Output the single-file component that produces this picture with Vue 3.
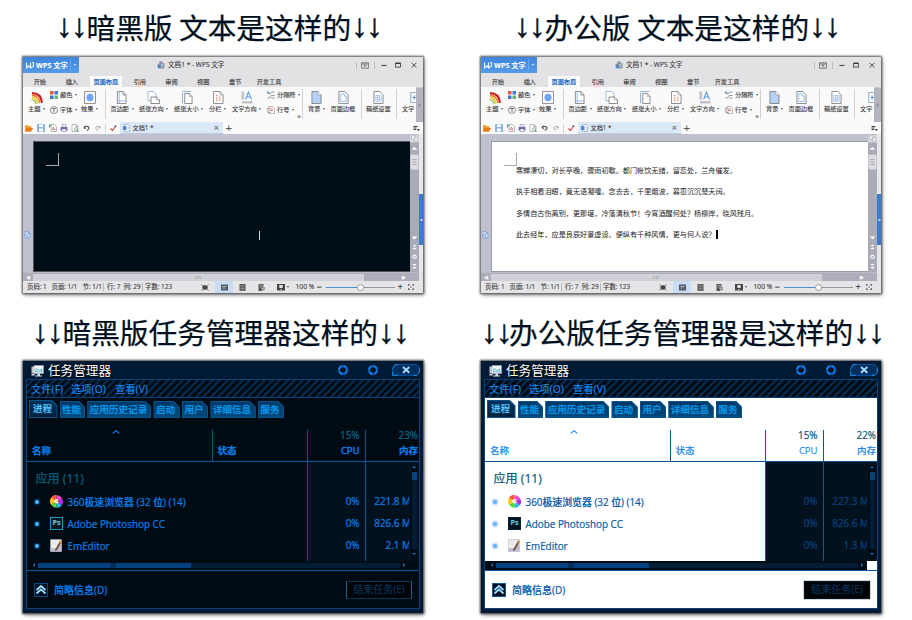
<script setup>
import { h } from 'vue'

const shapes = {
  w: ['0 0 14 12', '<path d="M1 1v9l4-3 3 3V1M5 5v3M8 10l5-3V1h-2" fill="none" stroke="#fff" stroke-width="1.8"/>'],
  cloud: ['0 0 14 14', '<path d="M4 1h6v3h3v9H6V9H1V5h3z" fill="#8793a5"/><circle cx="4" cy="10" r="3" fill="#4d83c5"/><path d="M7 6h4M7 9h4" stroke="#fff"/>'],
  pin: ['0 0 14 14', '<path d="M1 1.500h12v11H1zM1 4h12M7 11V6M4.500 8L7 5.500 9.500 8" fill="none" stroke="#555" stroke-width="1.300"/>'],
  min: ['0 0 14 14', '<path d="M1 8h12" stroke="#333" stroke-width="2.200"/>'],
  max: ['0 0 14 14', '<path d="M1 3h12v9H1z" fill="none" stroke="#333" stroke-width="2"/><path d="M1 3h12" stroke="#333" stroke-width="3"/>'],
  close: ['0 0 14 14', '<path d="M1.500 2l11 11M12.500 2l-11 11" stroke="#333" stroke-width="2"/>'],
  theme: ['0 0 24 24', '<path d="M2 4c12 0 19 7 20 18" stroke="#c92027" stroke-width="4" fill="none"/><path d="M2 8c9 0 15 6 16 14" stroke="#ef7b20" stroke-width="3" fill="none"/><path d="M2 12c7 0 10 4 12 11" stroke="#eacb35" stroke-width="4" fill="none"/><path d="M1 16c5 0 8 3 9 8" stroke="#77b956" stroke-width="2" fill="none"/>'],
  color: ['0 0 16 16', '<path d="M0 0h7v7H0z" fill="#e65a3d"/><path d="M9 0h7v7H9z" fill="#3d7cdc"/><path d="M0 9h7v7H0z" fill="#3f74c9"/><path d="M9 9h7v7H9z" fill="#67b878"/>'],
  font: ['0 0 16 16', '<circle cx="8" cy="8" r="7" fill="none" stroke="#555" stroke-width="1.300"/><path d="M4.500 5h7M8 5v7" stroke="#444" stroke-width="1.500"/>'],
  effect: ['0 0 24 24', '<path d="M1 1h22v22H1z" fill="#fafafa" stroke="#777" stroke-width="1.500"/><circle cx="12" cy="12" r="7" fill="#71a3f2"/>'],
  margin: ['0 0 24 26', '<path d="M3 1h12l7 7v17H3z" fill="#fff" stroke="#777" stroke-width="1.700"/><path d="M15 1v7h7" fill="none" stroke="#777" stroke-width="1.500"/><path d="M7 1v24M3 20h19" fill="none" stroke="#80aeea" stroke-width="1.700"/>'],
  orient: ['0 0 26 26', '<path d="M2 1h11l5 5v13H2z" fill="#fff" stroke="#8badd8" stroke-width="1.700"/><path d="M8 12h11l6 6v7H8z" fill="#fff" stroke="#777" stroke-width="1.700"/><path d="M18 12v6h7" fill="none" stroke="#777"/>'],
  size: ['0 0 24 26', '<path d="M1 1h19M1 4v20" stroke="#85acdf" stroke-width="2"/><path d="M6 5h10l6 6v14H6z" fill="#fff" stroke="#777" stroke-width="1.700"/><path d="M16 5v6h6" fill="none" stroke="#777"/>'],
  columns: ['0 0 24 26', '<path d="M1 1h14l7 7v17H1z" fill="#fff" stroke="#777" stroke-width="1.700"/><path d="M15 1v7h7" fill="none" stroke="#777"/><path d="M8 8v13M15 11v10" stroke="#df8060" stroke-width="3" stroke-dasharray="2 1.500"/>'],
  textdir: ['0 0 26 26', '<path d="M1 1h6v16H1zM2 20h23v5H2z" fill="#c8c8ca"/><path d="M3 1v16M2 23h23" stroke="#aaa" stroke-dasharray="2 1"/><path d="M10 17l6-15 7 15M12 12h8" fill="none" stroke="#5797e5" stroke-width="2.200"/>'],
  breaks: ['0 0 18 16', '<path d="M1 1l2 4h5M6 5c4 0 1-3 8-3h3M1 14h4c2 0 2-5 5-5h7M9 14h8" fill="none" stroke="#666" stroke-width="1.400"/><path d="M1 0v6l4-3z" fill="#4989d3"/>'],
  lines: ['0 0 16 16', '<path d="M4 1h7l4 4v10H4z" fill="#fff" stroke="#777"/><path d="M1 3v10h7" fill="none" stroke="#777"/><path d="M6 6h6M6 9h6M2 5h3" stroke="#cf5757" stroke-width="1.500"/>'],
  back: ['0 0 24 26', '<path d="M2 1h13l7 7v17H2z" fill="#b7d0f8" stroke="#777" stroke-width="1.700"/><path d="M15 1v7h7" fill="#fff" stroke="#777"/>'],
  border: ['0 0 24 26', '<path d="M2 1h13l7 7v17H2z" fill="#fff" stroke="#777" stroke-width="1.700"/><path d="M6 6h8v4h4v11H6z" fill="none" stroke="#92bdf2" stroke-width="2"/>'],
  grid: ['0 0 24 26', '<path d="M2 1h13l7 7v17H2z" fill="#fff" stroke="#777" stroke-width="1.700"/><path d="M6 9h12v12H6zM6 13h12M6 17h12M10 9v12M14 9v12" fill="none" stroke="#92b8ee" stroke-width="1.300"/>'],
  half: ['0 0 16 26', '<path d="M15 3H2v20h13" fill="none" stroke="#829dc6" stroke-width="2"/><path d="M7 13h8M11 9v8" stroke="#4487dd" stroke-width="2"/>'],
  folder: ['0 0 16 14', '<path d="M0 2h6l2 2h5v3h3l-4 6H0z" fill="#f39b32"/><path d="M3 7h13l-4 6H0z" fill="#e87917"/>'],
  save: ['0 0 16 16', '<path d="M1 1h14v14H1z" fill="#8db6ee" stroke="#568bd5"/><path d="M4 1h8v5H4zM4 9h8v6H4z" fill="#fff"/>'],
  pdf: ['0 0 16 16', '<path d="M4 1h7l4 4v10H4z" fill="#fff" stroke="#777"/><path d="M1 2v5M1 2h4" stroke="#3c8956" stroke-width="2"/><path d="M6 12l3-6 3 6-5-2" fill="none" stroke="#cf4f56" stroke-width="1.300"/>'],
  print: ['0 0 16 16', '<path d="M1 6h14v7H1z" fill="#7774b2"/><path d="M4 1h8v5H4zM4 10h8v5H4z" fill="#fff" stroke="#6763a1"/>'],
  preview: ['0 0 16 16', '<path d="M2 1h8l4 4v10H2zM10 1v4h4" fill="#fff" stroke="#777"/><circle cx="10" cy="10" r="3" fill="#dceee8" stroke="#5c8f7e"/><path d="M12 12l3 3" stroke="#5c8f7e" stroke-width="2"/>'],
  undo: ['0 0 16 14', '<path d="M2 6l4-4M2 6l4 3M2 6c8-5 14-1 11 3-1 2-3 3-4 4" fill="none" stroke="#444" stroke-width="2.400"/>'],
  redo: ['0 0 16 14', '<path d="M14 6l-4-4M14 6l-4 3M14 6C6 1 0 5 3 9c1 2 3 3 5 3" fill="none" stroke="#888" stroke-width="1.900"/>'],
  check: ['0 0 14 14', '<path d="M1 7l4 4 5-7" fill="none" stroke="#d23c3c" stroke-width="2.200"/><path d="M9 1h4v3H9z" fill="#555"/>'],
  doc: ['0 0 14 16', '<path d="M3 1h7l3 4v10H3z" fill="#fff" stroke="#6f89a7"/><path d="M0 4h7v8H0z" fill="#4d8ad0"/><path d="M9 7h3M9 10h3" stroke="#7aa2d0"/>'],
  menu: ['0 0 14 14', '<path d="M1 3h8M1 6h6M1 9h5" stroke="#444" stroke-width="2"/><path d="M7 8h7l-3 4z" fill="#444"/>'],
  fit: ['0 0 16 14', '<path d="M4 4h8v6H4z" fill="#444"/><path d="M1 1l3 3M15 1l-3 3M1 13l3-3M15 13l-3-3M3 5v4M13 5v4M5 3h6M5 11h6" stroke="#555" stroke-width="1.600"/>'],
  view: ['0 0 14 14', '<path d="M0 1h14v12H0z" fill="#555c66"/><path d="M3 5h8M3 8h5" stroke="#d4e5f5" stroke-width="1.300"/>'],
  outline: ['0 0 14 14', '<path d="M1 0h12v14H1z" fill="#555"/><path d="M3 3h8M3 6h8M3 9h8M3 12h8" stroke="#bbb"/>'],
  web: ['0 0 14 14', '<path d="M1 0h10v5H8v9H1z" fill="#555"/><circle cx="10" cy="9" r="4" fill="#777"/><path d="M3 3h6M3 6h4M7 9h6M10 6v6" stroke="#ddd"/>'],
  screen: ['0 0 14 14', '<path d="M0 0h14v13H0z" fill="#444"/><path d="M4 2h6v6H4zM6 10h2v2H6z" fill="#e4e4e4"/>'],
  expand: ['0 0 12 12', '<path d="M1 4V1h3M8 1h3v3M1 8v3h3M8 11h3V8" fill="none" stroke="#555" stroke-width="1.700"/><path d="M4 4l4 4M8 4L4 8" stroke="#777"/>'],
  side: ['0 0 14 16', '<path d="M2 1h6l4 4v9H2zM8 1v4h4M0 8h7v6" fill="#d0def2" stroke="#6f9bdc" stroke-width="1.400"/>'],
  vscroll: ['0 0 8 140', '<path d="M0 .500h8v8H0z" fill="#d5d6df"/><path d="M1.500 2h3v3h-3zM4 4h3v3H4z" fill="#fff" stroke="#aaa" stroke-width=".600"/><path d="M1.500 16L4 13l2.500 3zM1.500 104L4 107l2.500-3z" fill="#fff"/><path d="M.500 21h7v15h-7z" fill="#dedfe3"/><path d="M2 26h4M2 28.500h4M2 31h4" stroke="#92939a" stroke-width=".700"/><path d="M2 114l2-2 2 2zM2 117l2-2 2 2zM2 132l2 2 2-2zM2 135l2 2 2-2z" fill="#fff"/><circle cx="4" cy="124.500" r="1.600" fill="none" stroke="#fff"/>'],
  monitor: ['0 0 26 24', '<path d="M1 3h18v14H1z" fill="#c5cbd0"/><path d="M6 1h19v16H6z" fill="#eef4f5" stroke="#a5b1b8"/><path d="M9 9c4-6 5 5 8 1l5-2v6H9z" fill="#bde3ef" stroke="#2292bf"/><path d="M13 17h5v4h4v2H8v-2h5zM1 18h6v3H1z" fill="#dce2e6"/>'],
  gear: ['0 0 24 24', '<circle cx="12" cy="12" r="8" fill="none" stroke="#064c9a" stroke-width="5"/><circle cx="12" cy="12" r="8" fill="none" stroke="#168aff" stroke-width="2.500" stroke-dasharray="9 3.560"/><circle cx="12" cy="12" r="4" fill="#03101e"/>'],
  exit: ['0 0 84 36', '<path d="M9 2h65l8 8v16l-8 8H2V14z" fill="#032d5c" stroke="#0a64ba" stroke-width="2.500"/><path d="M2 23v11h16M66 34h8l8-8V14M2 14L9 2h10" fill="none" stroke="#168ce6" stroke-width="3"/><path d="M33 9l19 17M52 9L33 26" stroke="#a1d9ff" stroke-width="6"/>'],
  sort: ['0 0 22 12', '<path d="M2 10l9-8 9 8" fill="none" stroke="#138cf0" stroke-width="3"/>'],
  dot: ['0 0 24 24', '<circle cx="12" cy="12" r="11" class="halo"/><circle cx="12" cy="12" r="7" class="glow"/><circle cx="12" cy="12" r="5" fill="#66b8ff"/>'],
  browser: ['0 0 26 26', '<g fill="none" stroke-width="9"><path d="M5 9a9 9 0 0 1 8-5" stroke="#ff5a35"/><path d="M13 5a8 8 0 0 1 7 4" stroke="#fb4ccc"/><path d="M20 9a8 8 0 0 1 0 9" stroke="#b52af0"/><path d="M20 18a9 9 0 0 1-7 3" stroke="#21bbf0"/><path d="M13 21a8 8 0 0 1-7-4" stroke="#58d437"/><path d="M6 17a8 8 0 0 1 0-9" stroke="#f5c822"/></g><circle cx="13" cy="13" r="4" fill="#f2a541"/><path d="M8 12c2-4 7-5 10-1-3-1-5 0-5 2s3 2 5 1c-2 4-8 4-10-2" fill="#fff"/>'],
  note: ['0 0 26 26', '<path d="M1 1h22v24H1z" fill="#efeff2" stroke="#aaa"/><path d="M1 18h14l8-8v15H1z" fill="#c0bcd6"/><path d="M4 6h9M4 10h8" stroke="#c8c8cd"/><path d="M20 3l4 2-10 17-4 2 1-5z" fill="#664735"/><path d="M20 3l4 2-2 4-4-2z" fill="#e49b37"/><path d="M18 8l-7 12" stroke="#f2d5a0"/>'],
  up: ['0 0 28 28', '<path d="M.500.500h27v27H.500z" fill="#001020" stroke="#075da5" stroke-width="2"/><path d="M5 14l9-8 9 8M5 21l9-8 9 8" fill="none" stroke="#9bdcff" stroke-width="3.500"/>'],
}
const Icon = (p) => h('svg', { viewBox: shapes[p.n][0], preserveAspectRatio: 'none', innerHTML: shapes[p.n][1] })
Icon.props = ['n']

const tools = [
  ['margin', '页边距'], ['orient', '纸张方向'], ['size', '纸张大小'], ['columns', '分栏'], ['textdir', '文字方向'],
]
const tabs = ['开始', '插入', '页面布局', '引用', '审阅', '视图', '章节', '开发工具']
const quick = ['folder', 'save', 'pdf', 'print', 'preview', 'undo', 'redo']
const poem = [
  '寒蝉凄切，对长亭晚，骤雨初歇。都门帐饮无绪，留恋处，兰舟催发。',
  '执手相看泪眼，竟无语凝噎。念去去，千里烟波，暮霭沉沉楚天阔。',
  '多情自古伤离别，更那堪，冷落清秋节！今宵酒醒何处？杨柳岸，晓风残月。',
  '此去经年，应是良辰好景虚设。便纵有千种风情，更与何人说？',
]
const editors = [
  { id: 'dark', title: '暗黑版 文本是这样的' },
  { id: 'light', title: '办公版 文本是这样的' },
]
const taskTabs = ['进程', '性能', '应用历史记录', '启动', '用户', '详细信息', '服务']
const managers = [
  { id: 'dark', title: '暗黑版任务管理器这样的', mem: '23%', rows: ['221.8', '826.6', '2.1'] },
  { id: 'light', title: '办公版任务管理器是这样的', mem: '22%', rows: ['227.3', '826.6', '1.3'] },
]
const apps = ['360极速浏览器 (32 位) (14)', 'Adobe Photoshop CC', 'EmEditor']
</script>

<template>
  <main class="board">
    <h2 v-for="e in editors" :key="e.id" class="caption first" :class="e.id"><i>↓↓</i><span>{{ e.title }}</span><i>↓↓</i></h2>

    <section v-for="e in editors" :key="e.id" class="wps" :class="e.id">
      <header class="bar">
        <div class="brand"><Icon n="w" /><b>WPS 文字</b><s></s><u class="caret"></u></div>
        <div class="name"><Icon n="cloud" /><span>文档1 * - WPS 文字</span></div>
        <div class="controls"><s></s><Icon n="pin" /><s></s><Icon n="min" /><Icon n="max" /><Icon n="close" /></div>
      </header>
      <nav class="tabs"><span v-for="(t, i) in tabs" :key="t" :class="{ on: i === 2 }">{{ t }}</span></nav>
      <div class="ribbon">
        <div class="tool t0"><Icon n="theme" /><span>主题<u class="caret"></u></span></div>
        <div class="stack s0">
          <span><Icon n="color" />颜色<u class="caret"></u></span>
          <span><Icon n="font" />字体<u class="caret"></u></span>
        </div>
        <div class="tool t1"><Icon n="effect" /><span>效果<u class="caret"></u></span></div>
        <s></s>
        <div v-for="t in tools" :key="t[0]" class="tool" :class="t[0]"><Icon :n="t[0]" /><span>{{ t[1] }}<u class="caret"></u></span></div>
        <div class="stack s1">
          <span><Icon n="breaks" />分隔符<u class="caret"></u></span>
          <span><Icon n="lines" />行号<u class="caret"></u></span>
        </div>
        <small class="more">G</small>
        <s></s>
        <div class="tool back"><Icon n="back" /><span>背景<u class="caret"></u></span></div>
        <div class="tool border"><Icon n="border" /><span>页面边框</span></div>
        <s></s>
        <div class="tool grid"><Icon n="grid" /><span>稿纸设置</span></div>
        <s></s>
        <div class="tool half"><Icon n="half" /><span>文字</span></div>
        <div class="next">›</div>
      </div>
      <div class="quick">
        <Icon v-for="q in quick" :key="q" :n="q" :class="q" /><s></s><Icon n="check" class="check" />
        <div class="file"><Icon n="doc" /><span>文档1 *</span><em>×</em></div>
        <b>+</b><Icon n="menu" class="menu" />
      </div>
      <div class="body">
        <div class="gutter"><Icon n="side" /></div>
        <div class="center">
          <div class="sheet">
            <div class="corner"></div>
            <template v-if="e.id === 'light'">
              <p v-for="(l, i) in poem" :key="l">{{ l }}<i v-if="i === 3" class="cursor"></i></p>
            </template>
            <i v-else class="cursor"></i>
          </div>
        </div>
        <Icon n="vscroll" class="vscroll" />
        <div class="dock"><div>◂</div></div>
      </div>
      <div class="hscroll"><i>◀</i><div>III</div><i>▶</i></div>
      <footer class="status">
        <span>页码: 1</span><span>页面: 1/1</span><span>节: 1/1</span><span class="lined">行: 7</span><span>列: 29</span><span class="lined">字数: 123</span><span class="lined"></span>
        <Icon n="fit" /><div class="active"><Icon n="view" /></div><Icon n="outline" /><Icon n="web" /><Icon n="screen" /><u class="caret"></u>
        <span class="pct">100 %</span><b>−</b><div class="slider"><i></i></div><b>+</b><Icon n="expand" class="expand" />
      </footer>
    </section>

    <h2 v-for="m in managers" :key="m.id" class="caption second" :class="m.id"><i>↓↓</i><span>{{ m.title }}</span><i>↓↓</i></h2>

    <section v-for="m in managers" :key="m.id" class="tm" :class="m.id">
      <header><Icon n="monitor" /><h3>任务管理器</h3><Icon n="gear" class="gear" /><Icon n="gear" class="gear" /><Icon n="exit" class="exit" /></header>
      <div class="inner">
        <nav class="commands"><span>文件(F)</span><span>选项(O)</span><span>查看(V)</span></nav>
        <div class="pages"><div v-for="(t, i) in taskTabs" :key="t" :class="['tab', 'p' + i]"><span>{{ t }}</span></div></div>
        <div class="head">
          <div class="h-name"><Icon n="sort" /><b>名称</b></div>
          <div class="h-state"><b>状态</b></div>
          <div class="h-num"><span>15%</span><b>CPU</b></div>
          <div class="h-num"><span>{{ m.mem }}</span><b>内存</b></div>
        </div>
        <div class="list">
          <div class="names">
            <h4>应用 (11)</h4>
            <div v-for="(a, i) in apps" :key="a" class="app">
              <Icon n="dot" class="dot" />
              <Icon v-if="i !== 1" :n="i ? 'note' : 'browser'" class="logo" />
              <div v-else class="logo ps">Ps</div>
              <span>{{ a }}</span>
            </div>
          </div>
          <div class="nums"><span v-for="a in apps" :key="a">0%</span></div>
          <div class="nums mem"><span v-for="r in m.rows" :key="r">{{ r }} <i>M</i></span></div>
          <div class="tvs"><i class="a-up"></i><div><b></b></div><i class="a-down"></i></div>
        </div>
        <div class="ths"><div class="rail"><i class="a-left"></i><div><b></b></div><i class="a-right"></i></div></div>
        <footer><Icon n="up" /><span>简略信息(D)</span><button>结束任务(E)</button></footer>
      </div>
    </section>
  </main>
</template>

<style>
body { background: #fff; }
</style>
<style scoped>
* { box-sizing: border-box; }
svg { display: block; flex: none; }
s { display: block; flex: none; width: 1px; background: #d2d2d6; text-decoration: none; }
i, em { font-style: normal; }
.board {
  width: 912px; height: 620px; overflow: hidden; background: #fff; padding-left: 23px;
  display: grid; grid-template-columns: 400px 400px; column-gap: 58px; grid-template-rows: 57px 236px 68px 252px;
  font-family: "Open Sans", "Noto Sans CJK SC", sans-serif;
}
.caption { margin: 0; display: flex; height: 57px; padding-left: 33px; color: #001020; font: 400 28.700px/53px "Noto Sans CJK SC", sans-serif; white-space: pre; -webkit-text-stroke: .25px #001020; }
.caption i { font: 33px/51px "Liberation Sans", sans-serif; letter-spacing: -1.500px; width: 30.500px; -webkit-text-stroke: .5px #001020; }
.caption.second { height: 68px; padding-left: 9px; padding-bottom: 14px; align-items: flex-end; }
.caption.second.light { padding-left: 0; }
.caption.second.light i:first-child { width: 28px; }
.caption.second span { line-height: 30px; }
.caption.second i { line-height: 28px; padding-bottom: 1px; }

.wps { width: 400px; height: 236px; background: #e2e2e5; box-shadow: 0 0 2px 1px #555, 1px 2px 4px #888; color: #3c3c3c; font-size: 6.200px; line-height: 8px; white-space: nowrap; display: flex; flex-direction: column; -webkit-text-stroke: .12px; }
.wps > * { flex: none; }
.caret { display: inline-block; flex: none; width: 0; height: 0; border: 1.500px solid transparent; border-top: 2px solid #555; border-bottom: 0; margin-left: 2.500px; vertical-align: 1px; }
.bar { display: flex; height: 16px; align-items: center; }
.brand { width: 56px; height: 16px; background: linear-gradient(#3d84dc, #559be9); display: flex; align-items: center; padding-left: 3px; color: #fff; font-size: 7.200px; }
.brand svg { width: 8px; height: 7px; margin-right: 2px; }
.brand b { width: 34px; font-weight: 700; }
.brand s { height: 12px; background: #6ba8ed; }
.brand .caret { border-top-color: #fff; }
.name { display: flex; width: 277px; padding-left: 78px; align-items: center; font-size: 6.600px; gap: 3px; }
.name svg { width: 8px; height: 8px; }
.controls { display: flex; align-items: center; }
.controls s { height: 7px; background: #bbb; margin-right: 4px; }
.controls svg { width: 6px; height: 6px; }
.controls svg:nth-of-type(1) { width: 8px; height: 7px; margin-right: 5px; }
.controls svg:nth-of-type(2) { margin: 0 8px 0 2px; }
.controls svg:nth-of-type(3) { margin-right: 10px; }
.tabs { height: 14px; display: grid; grid-template-columns: 32px 24.300px 43.700px 31.600px 31.700px 32px 27.700px 40px; padding: 2.500px 0 0 10.700px; line-height: 11.500px; }
.tabs .on { width: 32px; padding-left: 3.500px; background: #fafafb; color: #2a70c9; font-weight: 700; }
.ribbon { height: 35px; background: #fafafb; display: flex; padding-left: 5px; overflow: hidden; }
.ribbon > s { height: 30px; margin-top: 2px; }
.tool { flex: none; display: flex; flex-direction: column; padding-top: 3.500px; }
.tool svg { width: 11px; height: 13px; margin-left: 5px; }
.tool > span { margin-top: 1.500px; display: block; }
.t0 { width: 21.500px; } .t0 svg { margin-left: 3px; width: 12px; }
.t1 { width: 24px; } .t1 svg { margin-left: 3px; width: 12px; }
.stack { flex: none; padding-top: 4px; }
.stack > span { display: flex; align-items: center; height: 8px; margin-bottom: 7px; }
.stack svg { width: 8px; height: 8px; margin-right: 2.500px; }
.s0 { width: 31.500px; }
.orient { width: 35px; } .orient svg { width: 13px; margin-left: 8px; }
.size { width: 35px; } .size svg { margin-left: 8px; }
.columns { width: 23px; } .columns svg { margin-left: 4px; }
.margin { width: 33px; padding-left: 4.500px; }
.textdir { width: 34.500px; } .textdir svg { width: 12px; margin-left: 9px; }
.s1 { width: 31px; }
.more { width: 6px; padding-top: 26px; font-size: 4px; }
.back { width: 27.500px; padding-left: 5px; } .back svg { margin-left: 3px; }
.border { width: 30px; } .border svg { margin-left: 7px; }
.grid { width: 34.500px; padding-left: 4.500px; } .grid svg { margin-left: 7px; }
.half { width: 19px; padding-left: 5px; } .half svg { width: 6px; margin-left: 8px; }
.next { width: 7px; flex: none; margin-left: auto; background: #b3b4bf; line-height: 33px; text-align: center; color: #555; border-top: 1px solid #ccc; }
.quick { height: 12px; background: #fafafb; display: flex; align-items: center; padding-left: 2px; }
.quick > svg { width: 8px; height: 8px; margin-right: 4px; }
.quick .pdf { margin-right: 2.500px; }
.quick .print { margin-right: 3.500px; }
.quick .preview { margin-right: 4px; }
.quick .undo { width: 7px; height: 6px; margin-right: 5px; }
.quick .redo { width: 6px; height: 6px; margin-right: 4px; }
.quick s { height: 9px; margin-right: 4px; }
.quick .check { width: 7px; height: 7px; margin-right: 3px; }
.file { height: 12px; width: 103px; background: #dbe8f7; display: flex; align-items: center; padding: 0 4px 0 3px; border-bottom: 1px solid #bccde2; }
.file svg { width: 7px; height: 8px; margin-right: 2.500px; }
.file em { margin-left: auto; font-size: 9px; color: #666; }
.quick > b { font: 11px/11px "Liberation Sans", sans-serif; margin-left: 2.500px; color: #555; }
.quick .menu { width: 7px; height: 7px; margin: 0 3px 0 auto; }
.body { height: 138px; display: flex; background: #bfc2ce; }
.gutter { width: 10px; padding: 97px 0 0 1px; }
.gutter svg { width: 7px; height: 8px; }
.center { width: 377px; padding-top: 7px; }
.sheet { height: 131px; background: #fff; border: 1px solid #999ca8; border-right-width: 0; padding: 11px 0 0 24px; font: 7.140px/21.350px "Noto Sans CJK SC", sans-serif; color: #222; -webkit-text-stroke: 0; }
.corner { width: 13px; height: 13px; margin-left: -12px; border: solid #aaa; border-width: 0 1px 1px 0; margin-bottom: -6px; }
.sheet p { margin: 0; height: 21.350px; }
.cursor { display: inline-block; width: 2px; height: 9px; background: #000; margin-left: 0; vertical-align: -2px; }
.wps.dark .sheet { background: #000e18; border-color: #555; }
.wps.dark .cursor { background: #d8d8d8; display: block; margin: 71px 0 0 200.500px; width: 1.500px; }
.vscroll { width: 9px; height: 138px; background: #a9abb6; }
.dock { width: 4px; background: #e7e7ea; padding-top: 60px; }
.dock div { height: 51px; background: #387bd0; color: #fff; font-size: 4px; line-height: 51px; text-align: center; }
.hscroll { height: 9px; background: #adaeb9; display: flex; align-items: center; margin-right: 4px; border-top: 1px solid #b9bac4; font-family: "DejaVu Sans", sans-serif; }
.hscroll i { width: 10px; font-size: 5px; color: #fff; text-align: center; }
.hscroll div { width: 331px; height: 7px; background: #d0d1d7; text-align: center; font: 4px/7px "Liberation Sans", sans-serif; letter-spacing: 1px; color: #888; }
.hscroll i:last-child { margin-left: 35px; }
.status { height: 12px; display: flex; align-items: center; padding-left: 4px; font-size: 6.400px; background: #e5e5e8; }
.status > span { flex: none; width: 24.500px; }
.status > span:nth-child(2) { width: 31px; }
.status > span:nth-child(3) { width: 20.500px; }
.status > span:nth-child(4) { width: 20.500px; padding-left: 3px; }
.status > span:nth-child(5) { width: 18px; }
.status > span:nth-child(6) { width: 32px; padding-left: 2.500px; }
.status > span:nth-child(7) { width: 27px; }
.lined { border-left: 1px solid #bbb; }
.status svg { width: 7px; height: 7px; }
.active { width: 18px; height: 12px; background: #c9dcf3; padding: 2.500px 5.500px; margin: 0 6px 0 6.500px; }
.status > svg:nth-of-type(1) { width: 8px; }
.status > svg:nth-of-type(2) { margin-right: 12px; }
.status > svg:nth-of-type(3) { margin-right: 11.500px; }
.status > svg:nth-of-type(4) { width: 8px; }
.status > .pct { width: 21px; margin-left: 6.500px; font-size: 6.700px; }
.status b { font: 9px/10px "Liberation Sans", sans-serif; width: 9px; color: #333; }
.slider { width: 69px; height: 1px; background: linear-gradient(90deg, #4c8dd8 50%, #999 50%); display: flex; align-items: center; padding-left: 31px; }
.slider i { flex: none; width: 7px; height: 7px; border: 1px solid #999; border-radius: 50%; background: #fff; }
.slider + b { margin-left: 3px; }
.status .expand { width: 6px; height: 6px; margin-left: 1px; }

.tm { width: 400px; height: 252px; background: #021b34; box-shadow: 0 0 2px 1px #444, 1px 2px 4px #888; white-space: nowrap; padding: 0 3px 0 3px; color: #0880ea; -webkit-text-stroke: .2px; }
.tm header { height: 18px; display: flex; align-items: flex-start; padding-left: 5px; }
.tm header > svg:first-child { width: 13px; height: 12px; margin: 4px 4px 0 0; }
h3 { margin: 0; width: 293px; font: 12.600px/17.500px "Noto Sans CJK SC", sans-serif; color: #fff; text-shadow: 0 0 2px #000, 0 0 2px #000; -webkit-text-stroke: 0; }
.gear { width: 12px; height: 12px; margin: 3px 18px 0 0; }
.gear + .exit { width: 28px; height: 12px; margin: 2.500px 0 0 -5px; }
.inner { height: 230px; border: 1px solid #06427d; background: #000b14; display: flex; flex-direction: column; }
.commands { height: 18px; border-bottom: 1px solid #074078; background: repeating-linear-gradient(135deg, #000c16 0 3px, #052b4c 3px 5.300px); display: grid; grid-template-columns: 40px 44px 40px; padding-left: 4px; font: 10.300px/18px "Open Sans", "Noto Sans CJK SC", sans-serif; color: #178bf4; text-shadow: 0 0 1px #000, 0 0 2px #000; }
.pages { display: flex; align-items: flex-end; height: 21px; gap: 2px; padding: 0 0 1px 2px; }
.tab { flex: none; height: 17px; background: #04538c; padding: 1px; clip-path: polygon(0 0, calc(100% - 6px) 0, 100% 6px, 100% 100%, 0 100%); font-size: 9.600px; line-height: 15px; color: #0ba0f0; }
.tab span { display: block; height: 15px; padding-left: 1.500px; background: linear-gradient(#023866, #01497c); clip-path: polygon(0 0, calc(100% - 6px) 0, 100% 6px, 100% 100%, 0 100%); text-shadow: 0 0 2px #0067b0; }
.p0 { width: 28.500px; height: 18.500px; color: #65ceff; } .p0 span { height: 16.500px; padding-left: 3px; background: linear-gradient(#02315a, #02203d); }
.p1 { width: 25.700px; } .p2 { width: 64.300px; } .p3, .p4 { width: 26.400px; } .p5 { width: 45.600px; } .p6 { width: 26.500px; }
.head { height: 42.500px; flex: none; display: grid; grid-template-columns: 185.500px 95px 58px 53.500px; padding-top: 11px; border-bottom: 1px solid #07559d; font-size: 9.700px; line-height: 14px; color: #0a84f4; }
.head b { font-weight: 500; font-family: "Open Sans", "Noto Sans CJK SC", sans-serif; font-size: 9.500px; -webkit-text-stroke: .35px; }
.head > div { border-right: 1px solid #055c87; }
.head > div:last-child { border-right: 0; }
.h-name { padding: 0 0 0 5px; display: flex; flex-direction: column; }
.h-name svg { width: 8px; height: 4px; margin: 0 0 9.500px 80px; }
.h-state { padding: 13.500px 0 0 5px; }
.h-num { display: flex; flex-direction: column; align-items: flex-end; padding-right: 5px; }
.h-num:last-child { padding-right: 1px; }
.h-num span { color: #076b8c; line-height: 10.500px; margin-bottom: 3px; font-size: 9.900px; }
.list { height: 99px; flex: none; display: grid; grid-template-columns: 280.500px 58px 53.500px; position: relative; overflow: hidden; }
.names { border-right: 1px solid #055c87; font-size: 9.900px; }
h4 { margin: 0; height: 29px; padding: 7px 0 0 8.500px; font-size: 12.100px; line-height: 20px; font-weight: 400; color: #07617f; }
.app { height: 22.200px; display: flex; align-items: center; color: #0880ea; }
.app > span, .nums span { font-family: "Open Sans", "Noto Sans CJK SC", sans-serif; font-weight: 500; }
.app > span { line-height: 14px; }
.dot { width: 8px; height: 8px; margin: 0 9px 0 6px; }
.dot :deep(.halo) { fill: #0466bd; opacity: .25; }
.dot :deep(.glow) { fill: #087be0; }
.logo { width: 13px; height: 13px; margin-right: 4.500px; flex: none; }
.ps { border: 1px solid #169bbd; background: #001522; color: #65c8df; font-size: 7px; line-height: 10px; text-align: center; font-weight: 700; }
.nums { background: #02111e; border-right: 1px solid #055c87; padding: 29px 5px 0 0; font-size: 9.900px; text-align: right; color: #0880ea; }
.nums span { display: block; height: 22.200px; line-height: 21.500px; }
.nums.mem { border: 0; padding-right: 10.500px; }
.mem i { display: inline-block; width: 6.500px; overflow: hidden; vertical-align: top; text-align: left; }
.tvs { position: absolute; right: 2px; top: 4px; width: 6px; height: 92px; display: flex; flex-direction: column; align-items: center; background: #000a13; }
.tvs div { width: 5px; height: 77px; margin: 4px 0; background: #031d34; }
.tvs b { display: block; height: 8px; background: #07427a; }
.a-up, .a-down, .a-left, .a-right { flex: none; width: 0; height: 0; border: 2px solid transparent; }
.a-up { border-bottom-color: #0d78ce; border-top: 0; }
.a-down { border-top-color: #0d78ce; border-bottom: 0; }
.a-left { border-right-color: #0d78ce; border-left: 0; }
.a-right { border-left-color: #0d78ce; border-right: 0; }
.ths { height: 10.500px; flex: none; border-bottom: 1px solid #07559d; }
.rail { width: 382px; height: 9.500px; display: flex; align-items: center; padding-left: 6px; gap: 3px; background: #000b14; }
.rail div { width: 362px; height: 5px; background: #031d34; }
.rail b { display: block; width: 153px; height: 5px; background: linear-gradient(90deg, #03427e 72px, #02305c 72px 78px, #03427e 78px); }
.inner footer { flex: 1; display: flex; align-items: flex-start; padding: 12px 0 0 7px; font-size: 10px; line-height: 14px; }
.inner footer svg { width: 14px; height: 14px; margin-right: 6px; }
.inner footer > span { width: 292px; font-weight: 500; }
button { width: 66px; height: 17.500px; margin-top: -2px; padding: 0; border: 1px solid #063653; border-left-color: #16638e; border-right-color: #16638e; background: #000408; color: #053358; font: 10px/15px "Open Sans", "Noto Sans CJK SC", sans-serif; }
.tm.light .inner { background: #fff; }
.tm.light h4, .tm.light .h-num span { color: #07567a; }
.tm.light .head { color: #1286ec; }
.tm.light .head b { -webkit-text-stroke: .1px; }
.tm.light .app, .tm.light footer { color: #0959a5; }
.tm.light .nums { color: #064280; }
.tm.light button { border-color: #021422; box-shadow: 0 0 1px #000; color: #04345a; }
.tm.light .dot :deep(.halo) { fill: #a4c9ff; opacity: .45; }
.tm.light .dot :deep(.glow) { fill: #78bcff; }
.tm.light .ps { border-color: #062232; }
</style>
